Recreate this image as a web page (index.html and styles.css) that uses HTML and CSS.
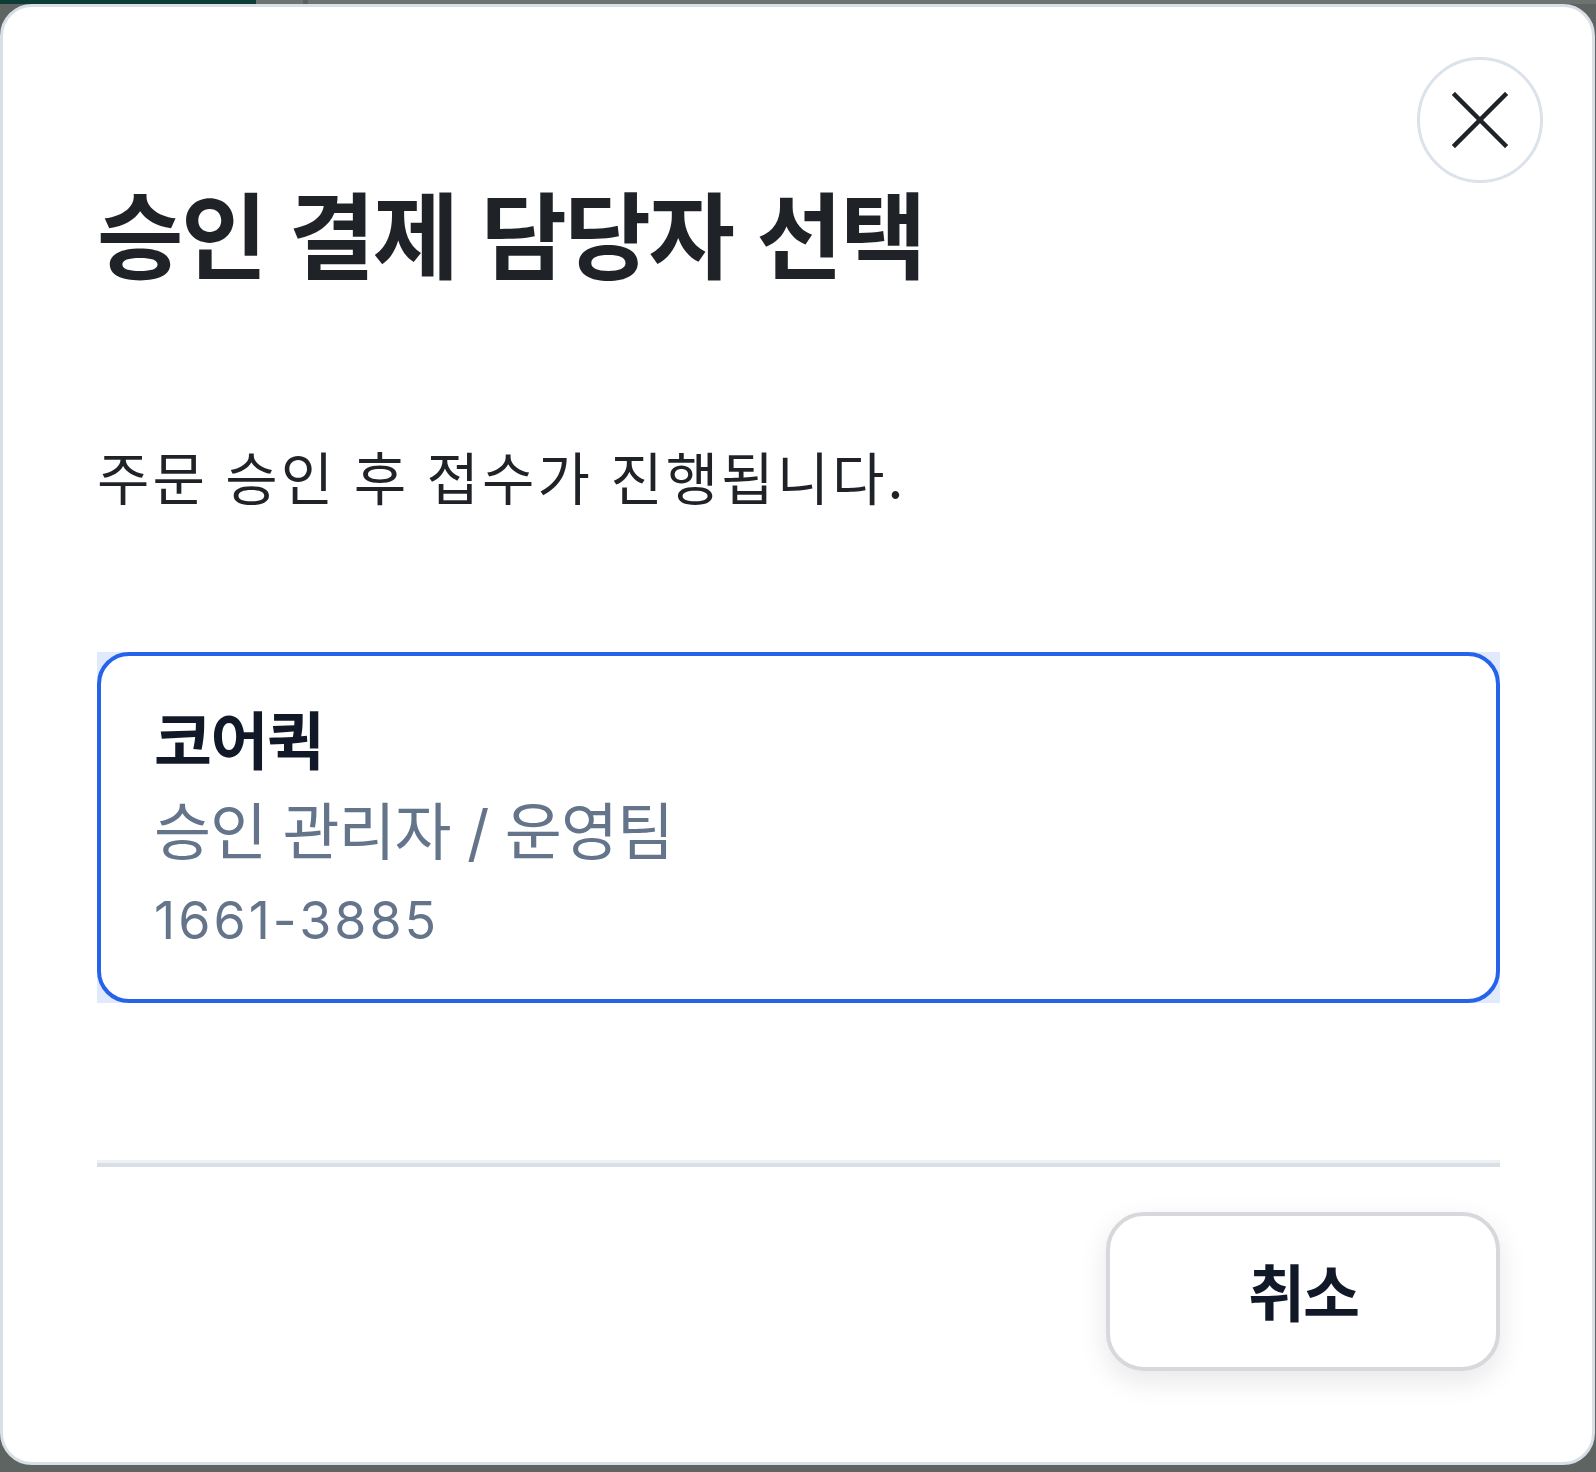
FILE: index.html
```html
<!DOCTYPE html>
<html lang="ko">
<head>
<meta charset="utf-8">
<title>승인 결제 담당자 선택</title>
<link rel="stylesheet" href="styles.css">
</head>
<body>
<div class="page">
  <div class="page-bar"><span class="bar-brand"></span><span class="bar-rest"><span class="bar-tick"></span></span></div>
</div>
<div class="dialog" role="dialog" aria-labelledby="dlg-title">
  <button class="close" type="button" aria-label="닫기">
    <svg class="close-icon" viewBox="0 0 56 56" width="56" height="56" aria-hidden="true"><path d="M3 3 L53 53 M53 3 L3 53"/></svg>
  </button>
  <h1 class="title" id="dlg-title">승인 결제 담당자 선택</h1>
  <p class="desc">주문 승인 후 접수가 진행됩니다.</p>
  <button class="option" type="button">
    <span class="option-card">
      <span class="opt-name">코어퀵</span>
      <span class="opt-role">승인 관리자 / 운영팀</span>
      <span class="opt-phone">1661-3885</span>
    </span>
  </button>
  <hr class="divider">
  <div class="footer"><button class="cancel" type="button">취소</button></div>
</div>
</body>
</html>
```
FILE: styles.css
```css
* { box-sizing: border-box; }
html, body { margin: 0; height: 100%; }
body {
  background: #5d6461;
  font-family: "Noto Sans CJK KR", sans-serif;
  overflow: hidden;
}
.page { height: 100%; }
.page-bar { display: flex; height: 4px; }
.bar-brand { width: 256px; background: #0d3b36; }
.bar-rest { flex: 1; background: #6c7370; padding-left: 47px; }
.bar-tick { display: block; width: 5px; height: 100%; background: #5a605d; }

.dialog {
  position: fixed;
  left: 0;
  top: 4px;
  width: 1595px;
  height: 1461px;
  background: #fff;
  border: 3px solid #d8dfe6;
  border-radius: 32px;
  padding: 177px 92px 0 94px;
  display: flex;
  flex-direction: column;
}
.close {
  position: absolute;
  top: 50px;
  right: 49px;
  width: 126px;
  height: 126px;
  border-radius: 50%;
  border: 3px solid #dce2e9;
  background: #fff;
  display: flex;
  align-items: center;
  justify-content: center;
  padding: 0;
}
.close-icon path { stroke: #1f2328; stroke-width: 4.5; stroke-linecap: square; fill: none; }

.title {
  margin: 0;
  font-size: 94px;
  font-weight: 700;
  line-height: 94px;
  letter-spacing: -2.5px;
  word-spacing: 0;
  color: #1f2328;
}
.desc {
  margin: 169px 0 0;
  font-size: 57px;
  line-height: 57px;
  letter-spacing: 3px;
  word-spacing: -1.5px;
  color: #1f2328;
}
.option {
  margin-top: 148px;
  padding: 0;
  border: 0;
  background: #e1e9fc;
  display: block;
  text-align: left;
  font: inherit;
}
.option-card {
  display: flex;
  flex-direction: column;
  height: 351px;
  border: 4px solid #2563eb;
  border-radius: 32px;
  background: #fff;
  padding: 49px 40px 0 53px;
}
.opt-name {
  font-size: 63px;
  font-weight: 700;
  line-height: 63px;
  letter-spacing: -1.5px;
  color: #111827;
}
.opt-role {
  margin-top: 34px;
  font-family: "Inter", "Noto Sans CJK KR", sans-serif;
  font-size: 62px;
  line-height: 62px;
  letter-spacing: -1px;
  color: #64748b;
}
.opt-phone {
  margin-top: 31px;
  font-family: "Inter", sans-serif;
  font-size: 52px;
  line-height: 52px;
  letter-spacing: 3px;
  color: #64748b;
}
.divider {
  margin: 157px 0 0;
  border: 0;
  height: 7px;
  background: linear-gradient(#eef1f4 0 3px, #d9dfe6 3px 7px);
}
.footer {
  display: flex;
  justify-content: flex-end;
  margin-top: 45px;
}
.cancel {
  width: 394px;
  height: 159px;
  border: 4px solid #d6d8db;
  border-radius: 38px;
  background: #fff;
  box-shadow: 0 10px 28px rgba(15, 23, 42, 0.10);
  font-family: "Noto Sans CJK KR", sans-serif;
  font-size: 62px;
  font-weight: 700;
  line-height: 1;
  letter-spacing: -2px;
  color: #111827;
  padding: 0 0 4px;
}
```
